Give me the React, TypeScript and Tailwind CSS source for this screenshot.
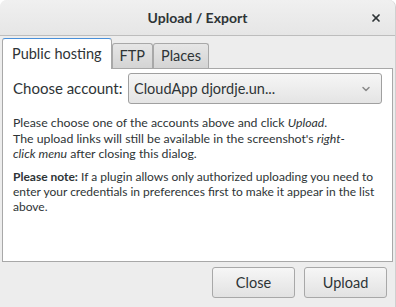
import { ChevronDown, X } from 'lucide-react';

const font = { fontFamily: 'Lato, "Liberation Sans", sans-serif' };

function Tab({ label, active }: { label: string; active?: boolean }) {
  if (active) {
    return (
      <div className="relative z-10 -mb-px flex h-[31px] items-center rounded-t-[3px] border border-b-0 border-[#a8a8a8] border-t-[#4a90d9] bg-white px-[9px] text-[14.5px] text-[#2e3436]">
        {label}
      </div>
    );
  }
  return (
    <div className="flex h-[25px] items-center rounded-t-[3px] border border-b-0 border-[#a8a8a8] bg-gradient-to-b from-[#e6e6e6] to-[#d4d4d4] px-[7px] text-[14.5px] text-[#2e3436]">
      {label}
    </div>
  );
}

export default function App() {
  return (
    <div className="h-[307px] w-[396px] overflow-hidden bg-white" style={font}>
      <div className="flex h-full flex-col rounded-t-[7px] border-r border-[#d0d0d0] bg-[#ededed]">
        {/* Title bar */}
        <div className="relative flex h-[36px] shrink-0 items-center justify-center rounded-t-[7px] border-b border-[#bdbdbd] bg-gradient-to-b from-[#f0f0f0] to-[#e6e6e6]">
          <span className="text-[14px] font-bold text-[#2e3436]">Upload / Export</span>
          <X className="absolute right-[13px] top-[12px] h-[12px] w-[12px] text-[#2e3436]" strokeWidth={3.5} />
        </div>

        {/* Tabs */}
        <div className="mt-[2px] flex items-end pl-[2px]">
          <Tab label="Public hosting" active />
          <Tab label="FTP" />
          <Tab label="Places" />
        </div>

        {/* Panel */}
        <div className="mx-[2px] flex h-[194px] flex-col border border-[#a8a8a8] bg-white px-[10px] pt-[4px] text-[#2e3436]">
          <div className="flex items-center">
            <span className="w-[115px] text-[15px]">Choose account:</span>
            <div className="flex h-[31px] flex-1 items-center justify-between rounded-[3px] border border-[#a0a0a0] bg-gradient-to-b from-[#f6f6f6] to-[#e4e4e4] pl-[5px] pr-[9px]">
              <span className="text-[14.5px]">CloudApp djordje.un...</span>
              <ChevronDown className="h-[12px] w-[12px] text-[#8a8a8a]" strokeWidth={3} />
            </div>
          </div>
          <p className="mt-[11px] max-w-[352px] text-[12.3px] leading-[15.5px]">
            Please choose one of the accounts above and click <i>Upload</i>.
            <br />
            The upload links will still be available in the screenshot's <i>right-click menu</i> after closing this dialog.
          </p>
          <p className="mt-[7px] text-[12px] leading-[15px]">
            <b>Please note:</b> If a plugin allows only authorized uploading you need to enter your credentials in preferences first to make it appear in the list above.
          </p>
        </div>

        {/* Buttons */}
        <div className="mt-[5px] flex justify-end gap-[9px] pr-[8px]">
          <button className="h-[31px] w-[83px] rounded-[3px] border border-[#a8a8a8] bg-gradient-to-b from-[#f6f6f6] to-[#e2e2e2] text-[14.5px] text-[#2e3436]">
            Close
          </button>
          <button className="h-[31px] w-[83px] rounded-[3px] border border-[#a8a8a8] bg-gradient-to-b from-[#f6f6f6] to-[#e2e2e2] text-[14.5px] text-[#2e3436]">
            Upload
          </button>
        </div>
      </div>
    </div>
  );
}
